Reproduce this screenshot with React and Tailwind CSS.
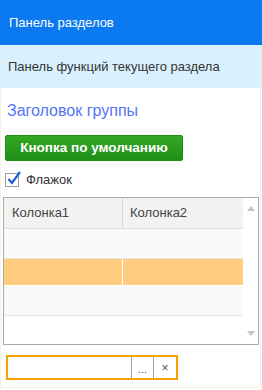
import React from "react";

export default function App() {
  return (
    <div className="w-[262px] h-[390px] bg-white text-[13px] font-['Liberation_Sans',Arial,sans-serif] overflow-hidden">
      {/* Section panel */}
      <div className="h-[45px] bg-[#0b79ef] text-white flex items-center pl-[9px] pt-[1px]">
        Панель разделов
      </div>
      {/* Functions panel */}
      <div className="h-[43px] bg-[#d9f1fd] text-[#333] flex items-center pl-[8px]">
        Панель функций текущего раздела
      </div>

      {/* Form area */}
      <div className="w-[261px] h-[300px] border border-t-0 border-[#f7f2e0] flex flex-col">
        <div className="text-[16px] text-[#5474f4] pl-[6px] mt-[14px] leading-[18px]">
          Заголовок группы
        </div>

        <button className="mt-[15px] ml-[4px] w-[178px] h-[26px] rounded-[2px] border border-[#1f8a14] bg-gradient-to-b from-[#34a826] to-[#1f8f16] text-white font-bold text-[13.5px] flex items-center justify-center">
          Кнопка по умолчанию
        </button>

        {/* Checkbox */}
        <div className="mt-[11px] ml-[4px] flex items-center gap-[7px] h-[15px]">
          <div className="w-[14px] h-[14px] border border-[#9a9a9a] bg-white relative">
            <svg viewBox="0 0 14 14" className="absolute left-[1px] top-[-3px] w-[14px] h-[14px] overflow-visible">
              <path d="M1.5 8 L5 12 L13 1" fill="none" stroke="#1f63d8" strokeWidth="2.3" />
            </svg>
          </div>
          <span className="text-[#333]">Флажок</span>
        </div>

        {/* Table */}
        <div className="mt-[10px] ml-[2px] w-[256px] h-[148px] border border-[#a9a9a9] flex">
          <div className="w-[239px] flex flex-col">
            <div className="h-[31px] bg-[#f2f2f2] flex border-b border-[#dcdcdc] text-[#444]">
              <div className="w-[119px] border-r border-[#d8d8d8] flex items-center pl-[8px]">Колонка1</div>
              <div className="flex-1 flex items-center pl-[7px]">Колонка2</div>
            </div>
            <div className="h-[30px] bg-[#fafafa] border-b border-[#e6e6e6]" />
            <div className="h-[27px] bg-[#ffcc80] flex border-b border-white">
              <div className="w-[119px] border-r border-white" />
              <div className="flex-1" />
            </div>
            <div className="h-[30px] bg-[#fafafa] border-b border-[#e6e6e6]" />
          </div>
          <div className="flex-1 flex flex-col items-center justify-between py-[8px]">
            <svg viewBox="0 0 8 5" className="w-[8px] h-[5px]">
              <path d="M4 0 L8 5 L0 5 Z" fill="#c4c4c4" />
            </svg>
            <svg viewBox="0 0 8 5" className="w-[8px] h-[5px]">
              <path d="M0 0 L8 0 L4 5 Z" fill="#c4c4c4" />
            </svg>
          </div>
        </div>

        {/* Input field */}
        <div className="mt-[10px] ml-[5px] w-[172px] h-[25px] border-2 border-[#f7a100] flex bg-white">
          <div className="flex-1" />
          <div className="w-[22px] border-l border-[#a0a0a0] flex items-center justify-center text-[#555] text-[11px] pt-[3px]">
            ...
          </div>
          <div className="w-[23px] border-l border-[#a0a0a0] flex items-center justify-center text-[#555] text-[12px]">
            ×
          </div>
        </div>
      </div>
    </div>
  );
}
